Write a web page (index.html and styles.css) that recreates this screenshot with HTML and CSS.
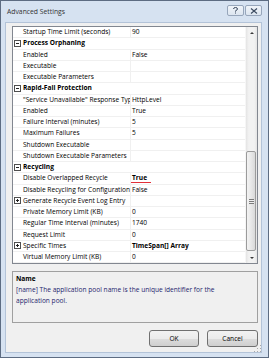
FILE: index.html
```html
<!DOCTYPE html>
<html lang="en">
<head>
    <meta charset="UTF-8">
    <title>Advanced Settings</title>
    <link rel="stylesheet" href="styles.css">
</head>
<body>

    <div class="window">
        <div class="titlebar">
            <span class="title">Advanced Settings</span>
            <div class="caption">
                <span class="cbtn">
                    <svg width="7" height="7" viewBox="0 0 7 7"><path d="M1.5 2 Q1.5 0.5 3.5 0.5 Q5.5 0.5 5.5 2 Q5.5 3 3.5 3.8 L3.5 4.6" fill="none" stroke="#3b4a60" stroke-width="1"/><rect x="3" y="5.5" width="1" height="1" fill="#3b4a60"/></svg>
                </span>
                <span class="cbtn">
                    <svg width="8" height="6" viewBox="0 0 8 6"><path d="M1 0.5 L7 5.5 M7 0.5 L1 5.5" fill="none" stroke="#3b4a60" stroke-width="1.1"/></svg>
                </span>
            </div>
        </div>

        <div class="client">
            <div class="grid">
                <div class="rows">
                    <div class="row"><span class="gut"></span><span class="name">Startup Time Limit (seconds)</span><span class="val">90</span></div>
                    <div class="row cat"><span class="gut"><i class="box"></i></span><span class="cat-name">Process Orphaning</span></div>
                    <div class="row"><span class="gut"></span><span class="name">Enabled</span><span class="val">False</span></div>
                    <div class="row"><span class="gut"></span><span class="name">Executable</span><span class="val"></span></div>
                    <div class="row"><span class="gut"></span><span class="name">Executable Parameters</span><span class="val"></span></div>
                    <div class="row cat"><span class="gut"><i class="box"></i></span><span class="cat-name">Rapid-Fail Protection</span></div>
                    <div class="row"><span class="gut"></span><span class="name">"Service Unavailable" Response Type</span><span class="val">HttpLevel</span></div>
                    <div class="row"><span class="gut"></span><span class="name">Enabled</span><span class="val">True</span></div>
                    <div class="row"><span class="gut"></span><span class="name">Failure Interval (minutes)</span><span class="val">5</span></div>
                    <div class="row"><span class="gut"></span><span class="name">Maximum Failures</span><span class="val">5</span></div>
                    <div class="row"><span class="gut"></span><span class="name">Shutdown Executable</span><span class="val"></span></div>
                    <div class="row"><span class="gut"></span><span class="name">Shutdown Executable Parameters</span><span class="val"></span></div>
                    <div class="row cat"><span class="gut"><i class="box"></i></span><span class="cat-name">Recycling</span></div>
                    <div class="row"><span class="gut"></span><span class="name">Disable Overlapped Recycle</span><span class="val"><b class="mark mark-true">True</b></span></div>
                    <div class="row"><span class="gut"></span><span class="name">Disable Recycling for Configuration Changes</span><span class="val">False</span></div>
                    <div class="row"><span class="gut"><i class="box plus"></i></span><span class="name">Generate Recycle Event Log Entry</span><span class="val"></span></div>
                    <div class="row"><span class="gut"></span><span class="name">Private Memory Limit (KB)</span><span class="val">0</span></div>
                    <div class="row"><span class="gut"></span><span class="name">Regular Time Interval (minutes)</span><span class="val">1740</span></div>
                    <div class="row"><span class="gut"></span><span class="name">Request Limit</span><span class="val">0</span></div>
                    <div class="row"><span class="gut"><i class="box plus"></i></span><span class="name"><span class="mark">Specific Times</span></span><span class="val"><b>TimeSpan[] Array</b></span></div>
                    <div class="row"><span class="gut"></span><span class="name">Virtual Memory Limit (KB)</span><span class="val">0</span></div>
                </div>
                <div class="scrollbar">
                    <div class="sb-btn"><i class="arrow up"></i></div>
                    <div class="sb-track"><div class="thumb"><i class="grip-lines"></i></div></div>
                    <div class="sb-btn"><i class="arrow down"></i></div>
                </div>
            </div>

            <div class="desc">
                <div class="desc-title">Name</div>
                <div class="desc-text">[name] The application pool name is the unique identifier for the<br>application pool.</div>
            </div>

            <div class="buttons">
                <button class="btn ok">OK</button>
                <button class="btn cancel">Cancel</button>
            </div>

            <div class="size-grip"></div>
        </div>
    </div>

</body>
</html>
```

FILE: styles.css
```css
/* Advanced Settings dialog */
body { margin: 0; font-family: "Open Sans", "Noto Sans", sans-serif; font-size: 6.6px; color: #000; }

.window { box-sizing: border-box; width: 269px; height: 358px; border: 1px solid #5d6c82; background: #d6e2f1; padding: 0 6px 4px 4px; display: flex; flex-direction: column; }

.titlebar { height: 21px; flex-shrink: 0; display: flex; justify-content: space-between; align-items: flex-start; }
.title { padding: 6px 0 0 2px; line-height: 10px; color: #333; font-size: 6.8px; }
.caption { display: flex; gap: 1px; margin-top: 4px; }
.cbtn { box-sizing: border-box; width: 17px; height: 11px; border: 1px solid #97a6bb; border-radius: 2px; background: linear-gradient(#f0f4f9, #dce5f0); display: flex; align-items: center; justify-content: center; }

.client { flex: 1; position: relative; background: #f0f0f0; border: 1px solid #b3c3d8; padding: 3px 3px 5px 6px; display: flex; flex-direction: column; min-height: 0; }

/* property grid */
.grid { flex-shrink: 0; height: 236.25px; border: 1px solid #828790; background: #fff; display: flex; overflow: hidden; }
.rows { flex: 1; overflow: hidden; }
.row { height: 11.25px; box-sizing: border-box; border-bottom: 1px solid #f0f0f0; display: grid; grid-template-columns: 9px 109px 1fr; align-items: center; line-height: 10px; white-space: nowrap; }
.gut { height: 100%; display: flex; align-items: center; padding-left: 1px; }
.name { height: 100%; box-sizing: border-box; border-right: 1px solid #f0f0f0; padding-left: 1px; overflow: hidden; display: flex; align-items: center; }
.val { padding-left: 1px; overflow: hidden; }
.cat-name { grid-column: 2 / 4; padding-left: 1px; font-weight: 700; }

.box { display: block; position: relative; width: 7px; height: 7px; box-sizing: border-box; border: 1px solid #4f4f4f; background: #fff; }
.box::before { content: ""; position: absolute; left: 1px; top: 2px; width: 3px; height: 1px; background: #222; }
.box.plus::after { content: ""; position: absolute; left: 2px; top: 1px; width: 1px; height: 3px; background: #222; }

.mark { position: relative; }
.mark::after { content: ""; position: absolute; left: 0; right: -3px; bottom: -1px; height: 1px; background: #e2303a; }
.mark-true::after { left: -1px; right: -4px; }

/* scrollbar */
.scrollbar { width: 11px; display: flex; flex-direction: column; background: linear-gradient(90deg, #e4e4e4, #f2f2f2 25%, #f2f2f2 75%, #e4e4e4); border-left: 1px solid #f6f6f6; }
.sb-btn { height: 11px; display: flex; align-items: center; justify-content: center; }
.arrow { width: 0; height: 0; border-left: 2px solid transparent; border-right: 2px solid transparent; }
.arrow.up { border-bottom: 2px solid #3a3a3a; }
.arrow.down { border-top: 2px solid #3a3a3a; }
.sb-track { flex: 1; padding-top: 113px; }
.thumb { box-sizing: border-box; height: 100px; margin: 0 1px 0 0; border: 1px solid #9b9b9b; border-radius: 2px; background: linear-gradient(90deg, #f3f3f3, #e8e8e8 50%, #d9d9d9); display: flex; align-items: center; justify-content: center; }
.grip-lines { width: 5px; height: 5px; background: repeating-linear-gradient(#7a7a7a 0 1px, #eeeeee 1px 2px); }

/* description */
.desc { flex-shrink: 0; box-sizing: border-box; height: 52px; margin-top: 7px; border: 1px solid #a0a0a0; padding: 1px 3px 0 3px; line-height: 11px; }
.desc-title { font-weight: 700; }
.desc-text { color: #25256e; }

/* buttons */
.buttons { flex-shrink: 0; margin-top: 7px; display: flex; justify-content: flex-end; gap: 8px; }
.btn { box-sizing: border-box; width: 50px; height: 17px; padding: 0; font-family: inherit; font-size: 6.6px; color: #000; border: 1px solid #707070; border-radius: 3px; background: linear-gradient(#f2f2f2 0%, #ebebeb 50%, #dddddd 51%, #cfcfcf 100%); }
.btn.cancel { width: 51px; }

.size-grip { position: absolute; right: 0; bottom: 0; width: 8px; height: 8px; background-image: radial-gradient(circle, #a8a8a8 0.7px, transparent 1px); background-size: 3px 3px; clip-path: polygon(100% 0, 100% 100%, 0 100%); }
```
